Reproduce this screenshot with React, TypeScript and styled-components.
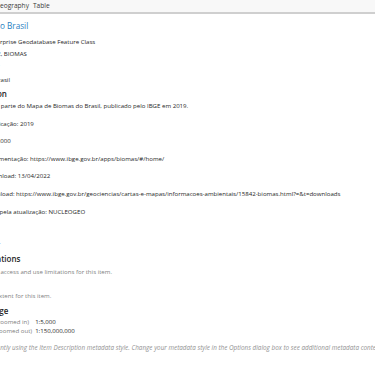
import React from 'react';
import styled, { createGlobalStyle } from 'styled-components';

const GlobalStyle = createGlobalStyle`
  html, body {
    margin: 0;
    padding: 0;
    background: #ffffff;
  }
  body {
    font-family: 'Open Sans', 'Noto Sans', sans-serif;
  }
`;

const Page = styled.div`
  width: 375px;
  height: 366px;
  overflow: hidden;
  background: #ffffff;
`;

const TabBar = styled.div`
  height: 12px;
  background: #f8f8f8;
  border-bottom: 2px solid #cfcfcf;
  display: flex;
  gap: 4px;
  margin-left: -36.6px;
  white-space: nowrap;
`;

const Tab = styled.span`
  font-size: 6.6px;
  line-height: 11px;
  color: #3a3a3a;
`;

const Content = styled.div`
  margin-left: -37.5px;
  white-space: nowrap;
`;

const Header = styled.div`
  padding-left: 2px;
  margin-top: 5px;
`;

const Title = styled.div`
  font-size: 8.2px;
  line-height: 14px;
  color: #1f7ec1;
`;

const ItemInfo = styled.div`
  padding-left: 22.7px;
  margin-top: 3px;
`;

const Line = styled.div<{ $top?: number; $muted?: boolean }>`
  font-size: 6.1px;
  line-height: 12px;
  color: ${p => (p.$muted ? '#808080' : '#262626')};
  margin-top: ${p => p.$top ?? 0}px;
`;

const Heading = styled.div<{ $top?: number }>`
  font-size: 8px;
  font-weight: 600;
  line-height: 12px;
  color: #1e1e1e;
  margin-top: ${p => p.$top ?? 0}px;
`;

const ScaleTable = styled.div`
  display: grid;
  grid-template-columns: max-content max-content;
  column-gap: 3px;
  padding-left: 3px;
  font-size: 6.1px;
  line-height: 9.5px;
`;

const ScaleLabel = styled.span`
  color: #808080;
`;

const ScaleValue = styled.span`
  color: #262626;
`;

const Note = styled.div`
  font-size: 6.35px;
  line-height: 12px;
  font-style: italic;
  color: #929292;
  margin-top: 6px;
`;

const paragraphs = [
  'Esta base faz parte do Mapa de Biomas do Brasil, publicado pelo IBGE em 2019.',
  'Data de publicação: 2019',
  'Escala: 1:250.000',
  'Link de documentação: https://www.ibge.gov.br/apps/biomas/#/home/',
  'Data do download: 13/04/2022',
  'Link do download: https://www.ibge.gov.br/geociencias/cartas-e-mapas/informacoes-ambientais/15842-biomas.html?=&t=downloads',
  'Responsável pela atualização: NUCLEOGEO'
];

export default function App() {
  return (
    <Page>
      <GlobalStyle />
      <TabBar>
        <Tab>Contents</Tab>
        <Tab>Geography</Tab>
        <Tab>Table</Tab>
      </TabBar>
      <Content>
        <Header>
          <Title>Biomas do Brasil</Title>
          <ItemInfo>
            <Line>Enterprise Geodatabase Feature Class</Line>
            <Line>IBGE, BIOMAS</Line>
          </ItemInfo>
        </Header>
        <Heading $top={1}>Summary</Heading>
        <Line $top={1}>Biomas do Brasil</Line>
        <Heading $top={2}>Description</Heading>
        {paragraphs.map((text, i) => (
          <Line key={i} $top={i === 0 ? 0 : 5.6}>
            {text}
          </Line>
        ))}
        <Heading $top={5}>Credits</Heading>
        <Line $top={1}>Fonte: (IBGE).</Line>
        <Heading $top={5}>Use limitations</Heading>
        <Line $top={1} $muted>
          There are no access and use limitations for this item.
        </Line>
        <Heading>Extent</Heading>
        <Line $muted>There is no extent for this item.</Line>
        <Heading $top={3}>Scale Range</Heading>
        <ScaleTable>
          <ScaleLabel>Maximum (zoomed in)</ScaleLabel>
          <ScaleValue>1:5,000</ScaleValue>
          <ScaleLabel>Minimum (zoomed out)</ScaleLabel>
          <ScaleValue>1:150,000,000</ScaleValue>
        </ScaleTable>
        <Note>
          You are currently using the Item Description metadata style. Change your metadata style in the Options dialog box to see additional metadata content.
        </Note>
      </Content>
    </Page>
  );
}
